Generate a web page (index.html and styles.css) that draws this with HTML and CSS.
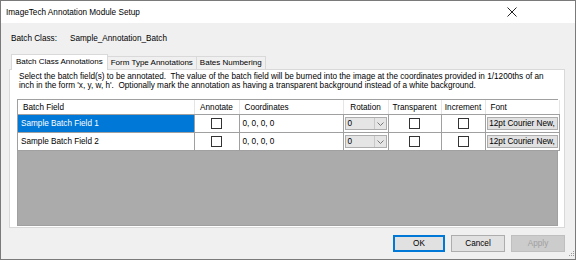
FILE: index.html
```html
<!DOCTYPE html>
<html lang="en">
<head>
    <meta charset="UTF-8">
    <title>ImageTech Annotation Module Setup</title>
    <link rel="stylesheet" href="styles.css">
</head>
<body>
    <div class="window">
        <div class="titlebar">
            <span class="title">ImageTech Annotation Module Setup</span>
            <svg class="close" width="10" height="10" viewBox="0 0 10 10">
                <path d="M0.5 0.5 L9.5 9.5 M9.5 0.5 L0.5 9.5" stroke="#222" stroke-width="1"/>
            </svg>
        </div>
        <div class="client">
            <div class="batch-row">
                <span class="label">Batch Class:</span>
                <span>Sample_Annotation_Batch</span>
            </div>
            <div class="tabs">
                <div class="tab active">Batch Class Annotations</div>
                <div class="tab">Form Type Annotations</div>
                <div class="tab">Bates Numbering</div>
            </div>
            <div class="panel">
                <p class="hint">Select the batch field(s) to be annotated.&nbsp; The value of the batch field will be burned into the image at the coordinates provided in 1/1200ths of an inch in the form 'x, y, w, h'.&nbsp; Optionally mark the annotation as having a transparent background instead of a white background.</p>
                <div class="grid">
                    <table>
                        <colgroup>
                            <col style="width:176px">
                            <col style="width:45px">
                            <col style="width:104px">
                            <col style="width:45px">
                            <col style="width:53px">
                            <col style="width:44px">
                            <col style="width:74px">
                        </colgroup>
                        <tr class="head">
                            <th class="left">Batch Field</th>
                            <th>Annotate</th>
                            <th class="left">Coordinates</th>
                            <th>Rotation</th>
                            <th>Transparent</th>
                            <th>Increment</th>
                            <th class="left">Font</th>
                        </tr>
                        <tr>
                            <td class="name selected">Sample Batch Field 1</td>
                            <td class="center"><span class="check"></span></td>
                            <td>0, 0, 0, 0</td>
                            <td class="combo-cell"><div class="combo"><span>0</span><span class="arrow"><svg width="7" height="4" viewBox="0 0 7 4"><path d="M0.5 0.5 L3.5 3.5 L6.5 0.5" fill="none" stroke="#777" stroke-width="1"/></svg></span></div></td>
                            <td class="center"><span class="check"></span></td>
                            <td class="center"><span class="check"></span></td>
                            <td class="btn-cell"><div class="font-btn">12pt Courier New,</div></td>
                        </tr>
                        <tr>
                            <td class="name">Sample Batch Field 2</td>
                            <td class="center"><span class="check"></span></td>
                            <td>0, 0, 0, 0</td>
                            <td class="combo-cell"><div class="combo"><span>0</span><span class="arrow"><svg width="7" height="4" viewBox="0 0 7 4"><path d="M0.5 0.5 L3.5 3.5 L6.5 0.5" fill="none" stroke="#777" stroke-width="1"/></svg></span></div></td>
                            <td class="center"><span class="check"></span></td>
                            <td class="center"><span class="check"></span></td>
                            <td class="btn-cell"><div class="font-btn">12pt Courier New,</div></td>
                        </tr>
                    </table>
                </div>
            </div>
            <div class="buttons">
                <button class="default">OK</button>
                <button>Cancel</button>
                <button disabled>Apply</button>
            </div>
            <svg class="grip" width="10" height="10" viewBox="0 0 10 10">
                <rect x="8" y="2" width="1" height="1" fill="#999"/>
                <rect x="6" y="4" width="1" height="1" fill="#999"/>
                <rect x="8" y="4" width="1" height="1" fill="#999"/>
                <rect x="4" y="6" width="1" height="1" fill="#999"/>
                <rect x="6" y="6" width="1" height="1" fill="#999"/>
                <rect x="8" y="6" width="1" height="1" fill="#999"/>
            </svg>
        </div>
    </div>
</body>
</html>
```
FILE: styles.css
```css
body {
    margin: 0;
    font-family: "Liberation Sans", Arial, sans-serif;
    font-size: 8.2px;
    color: #000;
    background: #fff;
}
.window {
    width: 576px;
    height: 260px;
    box-sizing: border-box;
    border: 1px solid #7a7a7a;
    display: flex;
    flex-direction: column;
}
.titlebar {
    height: 22px;
    background: #fff;
    display: flex;
    align-items: center;
    justify-content: space-between;
    padding: 0 58px 0 5px;
}
.title {
    font-size: 8.2px;
}
.client {
    flex: 1;
    background: #f0f0f0;
    padding: 0 10px 0 8px;
    position: relative;
}
.batch-row {
    display: flex;
    height: 14px;
    align-items: center;
    margin-top: 8px;
    padding-left: 2px;
}
.batch-row .label {
    width: 59px;
}
.tabs {
    display: flex;
    align-items: flex-end;
    height: 16px;
    margin-top: 8px;
    padding-left: 2px;
    font-size: 8px;
}
.tab {
    height: 12px;
    line-height: 12px;
    padding: 0 3px;
    border: 1px solid #d9d9d9;
    border-bottom: none;
    background: #f0f0f0;
    margin-left: -1px;
}
.tab.active {
    height: 15px;
    line-height: 14px;
    background: #fff;
    position: relative;
    top: 1px;
    z-index: 1;
    margin-left: 0;
    padding: 0 4px;
}
.panel {
    height: 159px;
    box-sizing: border-box;
    background: #fff;
    border: 1px solid #d9d9d9;
    padding: 2px 4px 0 7px;
}
.hint {
    margin: 0;
    line-height: 9px;
    padding-left: 2px;
}
.grid {
    margin-top: 9px;
    width: 541px;
    height: 127px;
    box-sizing: border-box;
    background: #ababab;
    border: 1px solid #a0a0a0;
}
table {
    border-collapse: collapse;
    table-layout: fixed;
    width: 539px;
}
th, td {
    height: 15px;
    padding: 0 3px;
    font-weight: normal;
    white-space: nowrap;
    overflow: hidden;
    background: #fff;
}
th {
    border-right: 1px solid #e5e5e5;
    border-bottom: 1px solid #a0a0a0;
    height: 14px;
}
th.left {
    text-align: left;
    padding-left: 5px;
}
td {
    border-right: 1px solid #a0a0a0;
    border-bottom: 1px solid #a0a0a0;
}
td.name {
    padding-left: 3px;
}
td.selected {
    background: #0078d7;
    color: #fff;
}
td.center {
    text-align: center;
}
.check {
    display: inline-block;
    width: 9px;
    height: 9px;
    border: 1px solid #333;
    background: #fff;
    vertical-align: middle;
}
td.combo-cell, td.btn-cell {
    padding: 1px;
}
.combo {
    display: flex;
    height: 13px;
    box-sizing: border-box;
    border: 1px solid #adadad;
    background: #e5e5e5;
    line-height: 11px;
}
.combo span:first-child {
    flex: 1;
    padding-left: 2px;
}
.combo .arrow {
    width: 11px;
    border-left: 1px solid #c8c8c8;
    display: flex;
    align-items: center;
    justify-content: center;
}
.font-btn {
    height: 13px;
    box-sizing: border-box;
    border: 1px solid #adadad;
    background: #e1e1e1;
    text-align: center;
    line-height: 11px;
}
.buttons {
    display: flex;
    justify-content: flex-end;
    gap: 6px;
    margin-top: 7px;
}
button {
    width: 54px;
    height: 17px;
    font-family: inherit;
    font-size: 8.2px;
    background: #e1e1e1;
    border: 1px solid #adadad;
    padding: 0;
    color: #000;
}
button.default {
    border: 1px solid #0078d7;
    box-shadow: inset 0 0 0 1px #0078d7;
    width: 52px;
}
button:disabled {
    background: #cccccc;
    border-color: #bfbfbf;
    color: #a0a0a0;
}
.grip {
    position: absolute;
    right: 0;
    bottom: 0;
}
```
